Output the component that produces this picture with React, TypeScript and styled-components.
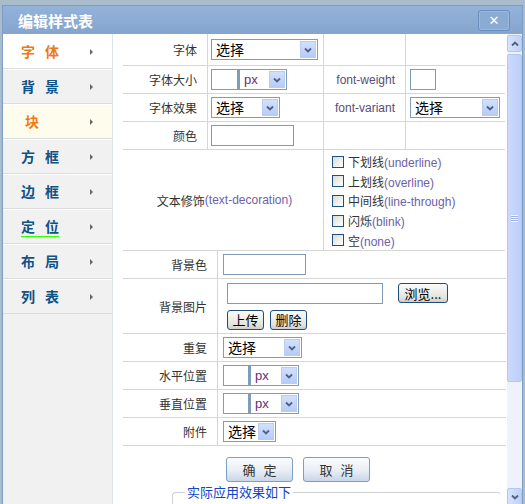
import React from 'react';
import styled, { createGlobalStyle } from 'styled-components';

const GlobalStyle = createGlobalStyle`
  html, body {
    margin: 0;
    padding: 0;
    background: #a9bccb;
    overflow: hidden;
  }
  body {
    font-family: "Noto Sans CJK SC", "DejaVu Sans", sans-serif;
    font-size: 12px;
    color: #333;
  }
`;

const Win = styled.div`
  margin: 5px 0 0 2px;
  width: 519px;
  height: 499px;
  border: 1px solid #7d9dc6;
  border-bottom: none;
  background: #fff;
  display: flex;
  flex-direction: column;
  overflow: hidden;
`;

const TitleBar = styled.div`
  height: 28px;
  flex: none;
  display: flex;
  align-items: center;
  justify-content: space-between;
  padding: 0 12px 0 15px;
  background: linear-gradient(#93b3d9, #84a5cd);
`;

const Title = styled.div`
  color: #fff;
  font-weight: bold;
  font-size: 15px;
`;

const CloseBtn = styled.div`
  width: 30px;
  height: 19px;
  border: 1px solid #6b8fbd;
  border-radius: 3px;
  background: #8aabd3;
  color: #fff;
  font-family: "DejaVu Sans", sans-serif;
  font-size: 13px;
  display: flex;
  align-items: center;
  justify-content: center;
  box-shadow: inset 0 0 0 1px #9cb9dc;
`;

const Body = styled.div`
  flex: 1;
  display: flex;
  min-height: 0;
`;

const Sidebar = styled.div`
  width: 109px;
  flex: none;
  background: #f1f1f1;
  border-right: 1px solid #dce4ee;
  display: flex;
  flex-direction: column;
`;

const NavItem = styled.div<{ $bg?: string }>`
  height: 33px;
  flex: none;
  display: flex;
  align-items: center;
  justify-content: space-between;
  padding: 0 19px 0 18px;
  background: ${(p) => p.$bg || '#f1f1f1'};
  border-top: 1px solid #fff;
  border-bottom: 1px solid #dcdcdc;
`;

const NavText = styled.span<{ $orange?: boolean; $line?: boolean; $indent?: number }>`
  display: flex;
  gap: 10px;
  font-weight: bold;
  font-size: 14px;
  margin-left: ${(p) => p.$indent || 0}px;
  color: ${(p) => (p.$orange ? '#ee7a12' : '#0f5286')};
  border-bottom: ${(p) => (p.$line ? '1px solid #33ff00' : '1px solid transparent')};
  padding-bottom: 1px;
  line-height: 18px;
`;

const Arrow = styled.span`
  width: 0;
  height: 0;
  border-top: 3px solid transparent;
  border-bottom: 3px solid transparent;
  border-left: 3px solid #666;
`;

const Main = styled.div`
  flex: 1;
  padding-left: 10px;
  overflow: hidden;
`;

const TopGrid = styled.div`
  display: grid;
  grid-template-columns: 85px 116px 82px 99px;
  grid-template-rows: 32px 28px 28px 28px 101px;
  width: 383px;
`;

const BottomGrid = styled.div`
  display: grid;
  grid-template-columns: 95px 288px;
  grid-template-rows: 28px 55px 28px 28px 28px 28px;
  width: 383px;
`;

const Cell = styled.div<{ $span?: number; $right?: boolean; $pad?: number; $last?: boolean; $col?: boolean; $center?: boolean }>`
  grid-column: span ${(p) => p.$span || 1};
  border-bottom: 1px solid #d6d6d6;
  border-right: ${(p) => (p.$last ? 'none' : '1px solid #d6d6d6')};
  display: flex;
  flex-direction: ${(p) => (p.$col ? 'column' : 'row')};
  align-items: ${(p) => (p.$col ? 'flex-start' : 'center')};
  justify-content: ${(p) => (p.$right ? 'flex-end' : p.$center ? 'center' : 'flex-start')};
  padding: ${(p) => (p.$right ? '0 10px 0 0' : `0 0 0 ${p.$pad ?? 3}px`)};
  box-sizing: border-box;
  font-size: 12px;
  color: #333;
`;

const En = styled.span<{ $dark?: boolean }>`
  font-family: "Liberation Sans", Arial, sans-serif;
  color: ${(p) => (p.$dark ? '#5a4d78' : '#6d62a8')};
  font-size: 12px;
`;

const TextBox = styled.div<{ $w: number }>`
  width: ${(p) => p.$w}px;
  height: 19px;
  border: 1px solid #7f9db9;
  background: #fff;
  flex: none;
`;

const SelectBox = styled.div<{ $w: number; $joined?: boolean }>`
  width: ${(p) => p.$w}px;
  height: 19px;
  border: 1px solid #7f9db9;
  border-left: ${(p) => (p.$joined ? '2px solid #7f9db9' : '1px solid #7f9db9')};
  background: #fff;
  display: flex;
  align-items: center;
  justify-content: space-between;
  flex: none;
  padding: 0 1px 0 4px;
  box-sizing: content-box;
`;

const SelText = styled.span<{ $px?: boolean }>`
  font-size: ${(p) => (p.$px ? '13px' : '14px')};
  font-family: ${(p) => (p.$px ? '"Liberation Sans", Arial, sans-serif' : 'inherit')};
  color: ${(p) => (p.$px ? '#6a2a7a' : '#000')};
  line-height: 19px;
`;

const DropBtn = styled.span`
  width: 16px;
  height: 17px;
  background: linear-gradient(#d3e0fd, #b7cbf7);
  border: 1px solid #b9cdf4;
  box-sizing: border-box;
  display: flex;
  align-items: center;
  justify-content: center;
`;

const Chevron = () => (
  <svg width="8" height="6" viewBox="0 0 8 6">
    <path d="M1 1.5 L4 4.5 L7 1.5" stroke="#4d6185" strokeWidth="1.8" fill="none" />
  </svg>
);

const Select = ({ w, text, px, joined }: { w: number; text: string; px?: boolean; joined?: boolean }) => (
  <SelectBox $w={w} $joined={joined}>
    <SelText $px={px}>{text}</SelText>
    <DropBtn>
      <Chevron />
    </DropBtn>
  </SelectBox>
);

const Pair = styled.div`
  display: flex;
`;

const CheckRow = styled.div`
  display: flex;
  align-items: center;
  height: 20px;
  gap: 4px;
`;

const CheckBox = styled.span`
  width: 10px;
  height: 10px;
  border: 1px solid #1c5180;
  background: linear-gradient(135deg, #dcdcd4, #fff);
`;

const ChecksCell = styled(Cell)`
  padding-top: 2px;
  padding-left: 8px;
`;

const ImgCell = styled(Cell)`
  flex-direction: column;
  align-items: flex-start;
  justify-content: center;
  gap: 6px;
  padding-left: 9px;
`;

const Line = styled.div<{ $gap: number }>`
  display: flex;
  align-items: center;
  gap: ${(p) => p.$gap}px;
`;

const SmallBtn = styled.div<{ $w: number }>`
  width: ${(p) => p.$w}px;
  height: 20px;
  border: 1px solid #1f4d7e;
  border-radius: 3px;
  background: linear-gradient(#fbfbfa, #e4e4de 75%, #cfcfca);
  font-size: 13px;
  color: #000;
  display: flex;
  align-items: center;
  justify-content: center;
  box-sizing: border-box;
`;

const Buttons = styled.div`
  display: flex;
  gap: 10px;
  padding: 11px 0 0 103px;
`;

const BigBtn = styled.div`
  width: 67px;
  height: 25px;
  border: 1px solid #7f9ec4;
  border-radius: 3px;
  background: linear-gradient(#fbfcfe, #e9eef5 55%, #c8d6e8);
  font-size: 13px;
  color: #333;
  letter-spacing: 8px;
  padding-left: 8px;
  box-sizing: border-box;
  display: flex;
  align-items: center;
  justify-content: center;
`;

const Field = styled.div`
  margin: 10px 0 0 49px;
  width: 328px;
  height: 40px;
  border-top: 1px solid #d0d0d0;
  border-left: 1px solid #d0d0d0;
  border-radius: 4px 4px 0 0;
  position: relative;
`;

const Legend = styled.span`
  position: absolute;
  top: -9px;
  left: 12px;
  padding: 0 2px;
  background: #fff;
  color: #1144cc;
  font-size: 13px;
  line-height: 16px;
`;

const Scroll = styled.div`
  width: 15px;
  flex: none;
  background: #eef2fc;
  display: flex;
  flex-direction: column;
`;

const ScrollBtn = styled.div`
  height: 17px;
  margin-top: 1px;
  background: linear-gradient(90deg, #d7e3fd, #bfd1f8);
  border: 1px solid #b4c8ef;
  border-radius: 2px;
  display: flex;
  align-items: center;
  justify-content: center;
  box-sizing: border-box;
`;

const Thumb = styled.div`
  height: 328px;
  margin-top: 2px;
  background: linear-gradient(90deg, #cbdafc, #bccffa);
  border: 1px solid #b4c8ef;
  border-radius: 2px;
  box-sizing: border-box;
  display: flex;
  align-items: center;
  justify-content: center;
`;

const Grip = styled.div`
  width: 7px;
  height: 7px;
  background: repeating-linear-gradient(#eef3ff 0 1px, #9fb4e0 1px 2px);
`;

const Track = styled.div`
  flex: 1;
`;

const navItems = [
  { t: '字体', bg: '#fff', orange: true },
  { t: '背景' },
  { t: '块', bg: '#fefcec', orange: true, indent: 4 },
  { t: '方框' },
  { t: '边框' },
  { t: '定位', line: true },
  { t: '布局' },
  { t: '列表' },
];

const checks = [
  ['下划线', '(underline)'],
  ['上划线', '(overline)'],
  ['中间线', '(line-through)'],
  ['闪烁', '(blink)'],
  ['空', '(none)'],
];

const App: React.FC = () => {
  return (
    <>
      <GlobalStyle />
      <Win>
        <TitleBar>
          <Title>编辑样式表</Title>
          <CloseBtn>✕</CloseBtn>
        </TitleBar>
        <Body>
          <Sidebar>
            {navItems.map((n) => (
              <NavItem key={n.t} $bg={n.bg}>
                <NavText $orange={n.orange} $line={n.line} $indent={n.indent}>
                  {n.t.split('').map((ch) => (
                    <span key={ch}>{ch}</span>
                  ))}
                </NavText>
                <Arrow />
              </NavItem>
            ))}
          </Sidebar>
          <Main>
            <TopGrid>
              <Cell $right>字体</Cell>
              <Cell>
                <Select w={100} text="选择" />
              </Cell>
              <Cell />
              <Cell $last />

              <Cell $right>字体大小</Cell>
              <Cell>
                <Pair>
                  <TextBox $w={25} />
                  <Select w={41} text="px" px joined />
                </Pair>
              </Cell>
              <Cell $right>
                <En $dark>font-weight</En>
              </Cell>
              <Cell $last $pad={4}>
                <TextBox $w={24} />
              </Cell>

              <Cell $right>字体效果</Cell>
              <Cell>
                <Select w={62} text="选择" />
              </Cell>
              <Cell $right>
                <En $dark>font-variant</En>
              </Cell>
              <Cell $last $pad={4}>
                <Select w={83} text="选择" />
              </Cell>

              <Cell $right>颜色</Cell>
              <Cell>
                <TextBox $w={81} />
              </Cell>
              <Cell />
              <Cell $last />

              <Cell $span={2} $center>
                文本修饰<En>(text-decoration)</En>
              </Cell>
              <ChecksCell $span={2} $last $col>
                {checks.map(([c, e]) => (
                  <CheckRow key={e}>
                    <CheckBox />
                    <span>
                      {c}
                      <En>{e}</En>
                    </span>
                  </CheckRow>
                ))}
              </ChecksCell>
            </TopGrid>

            <BottomGrid>
              <Cell $right>背景色</Cell>
              <Cell $last $pad={5}>
                <TextBox $w={81} />
              </Cell>

              <Cell $right>背景图片</Cell>
              <ImgCell $last>
                <Line $gap={15}>
                  <TextBox $w={154} />
                  <SmallBtn $w={50}>浏览...</SmallBtn>
                </Line>
                <Line $gap={6}>
                  <SmallBtn $w={37}>上传</SmallBtn>
                  <SmallBtn $w={37}>删除</SmallBtn>
                </Line>
              </ImgCell>

              <Cell $right>重复</Cell>
              <Cell $last $pad={5}>
                <Select w={72} text="选择" />
              </Cell>

              <Cell $right>水平位置</Cell>
              <Cell $last $pad={5}>
                <Pair>
                  <TextBox $w={24} />
                  <Select w={42} text="px" px joined />
                </Pair>
              </Cell>

              <Cell $right>垂直位置</Cell>
              <Cell $last $pad={5}>
                <Pair>
                  <TextBox $w={24} />
                  <Select w={42} text="px" px joined />
                </Pair>
              </Cell>

              <Cell $right>附件</Cell>
              <Cell $last $pad={5}>
                <Select w={46} text="选择" />
              </Cell>
            </BottomGrid>

            <Buttons>
              <BigBtn>确定</BigBtn>
              <BigBtn>取消</BigBtn>
            </Buttons>
            <Field>
              <Legend>实际应用效果如下</Legend>
            </Field>
          </Main>
          <Scroll>
            <ScrollBtn>
              <svg width="8" height="6" viewBox="0 0 8 6">
                <path d="M1 4.5 L4 1.5 L7 4.5" stroke="#4d6185" strokeWidth="1.8" fill="none" />
              </svg>
            </ScrollBtn>
            <Thumb>
              <Grip />
            </Thumb>
            <Track />
            <ScrollBtn>
              <Chevron />
            </ScrollBtn>
          </Scroll>
        </Body>
      </Win>
    </>
  );
};

export default App;
